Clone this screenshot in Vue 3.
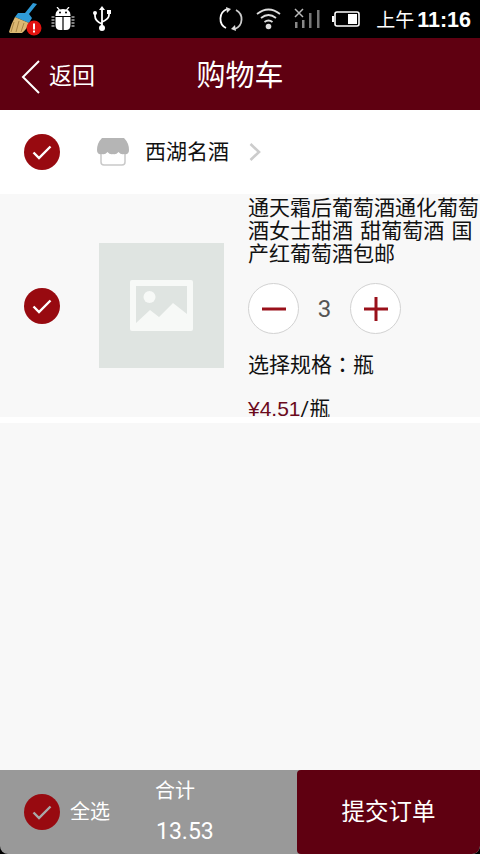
<script setup>
const title = '通天霜后葡萄酒通化葡萄酒女士甜酒 甜葡萄酒 国产红葡萄酒包邮'
const qty = 3
const spec = '瓶'
const price = '¥4.51'
const total = '13.53'
</script>

<template>
  <div class="page">
    <div class="status">
      <div class="status__left">
        <svg class="ic-broom" width="42" height="38" viewBox="0 0 42 38">
          <path d="M37 4 L33 3 L25 13 L18 13 L15 17 L29 23 L32 18 L29 14 Z" fill="#2f9bd8" />
          <path d="M15 17 L29 23 Q27 29 22 33 L10 33 Q10 33 9 32 Q11 24 15 17 Z" fill="#dcb872" />
          <path d="M14 22 L11 32 M19 21 L16 32 M24 23 L21 32" stroke="#a98445" stroke-width="1" fill="none" />
          <circle cx="34" cy="28" r="7.5" fill="#e1120f" />
          <rect x="33" y="23.5" width="2" height="6" fill="#fff" />
          <rect x="33" y="30.5" width="2" height="2" fill="#fff" />
        </svg>
        <svg class="ic-bug" width="24" height="24" viewBox="0 0 24 24">
          <path d="M6 0 L8.500 3 M18 0 L15.500 3" stroke="#fff" stroke-width="1.2" />
          <path d="M4.500 9 V8 Q4.500 2 12 2 Q19.500 2 19.500 8 V9 Z" fill="#fff" />
          <path d="M4.500 10 H11.400 V23 H9 Q4.500 23 4.500 18 Z M12.600 10 H19.500 V18 Q19.500 23 15 23 H12.600 Z" fill="#fff" />
          <path d="M0.500 10 H3.500 M0.500 13 H3.500 M0.500 16 H3.500 M0.500 19 H3.500 M20.500 10 H23.500 M20.500 13 H23.500 M20.500 16 H23.500 M20.500 19 H23.500" stroke="#fff" stroke-width="1.2" />
          <circle cx="9" cy="5.500" r="1" fill="#000" />
          <circle cx="15" cy="5.500" r="1" fill="#000" />
        </svg>
        <svg class="ic-usb" width="20" height="26" viewBox="0 0 20 26">
          <path d="M10 3 V22 M10 18 Q3 15 3 10 V8 M10 16 Q17 13 17 9 V7" stroke="#fff" stroke-width="1.8" fill="none" />
          <path d="M10 0 L13 4 H7 Z" fill="#fff" />
          <circle cx="3" cy="7" r="2" fill="#fff" />
          <rect x="15" y="4" width="4" height="4" fill="#fff" />
          <circle cx="10" cy="22" r="3" fill="#fff" />
        </svg>
      </div>
      <div class="status__right">
        <svg width="26" height="26" viewBox="0 0 26 26">
          <path d="M9 3 A10.5 10.5 0 0 0 8 22" stroke="#fff" stroke-width="1.8" fill="none" />
          <path d="M17 23 A10.5 10.5 0 0 0 18 4" stroke="#ccc" stroke-width="1.8" fill="none" />
          <path d="M8 1 L13 3 L9 7 Z" fill="#ddd" />
          <path d="M18 25 L13 23 L17 19 Z" fill="#ddd" />
        </svg>
        <svg width="25" height="22" viewBox="0 0 25 22">
          <path d="M1 6 Q12.5 -3 24 6 M5 10 Q12.5 4 20 10 M8.5 14 Q12.5 11 16.5 14" stroke="#ddd" stroke-width="1.8" fill="none" />
          <circle cx="12.5" cy="18.5" r="2.8" fill="#ddd" />
        </svg>
        <svg width="27" height="24" viewBox="0 0 27 24">
          <path d="M2 2 L10 10 M10 2 L2 10" stroke="#bbb" stroke-width="1.5" />
          <rect x="2" y="15" width="2.500" height="6" fill="#888" />
          <rect x="9" y="13" width="2.500" height="8" fill="#888" />
          <rect x="16" y="6" width="2.500" height="15" fill="#777" />
          <rect x="24" y="3" width="2.500" height="18" fill="#777" />
        </svg>
        <svg width="28" height="16" viewBox="0 0 28 16">
          <rect x="0" y="5" width="2" height="6" fill="#fff" />
          <rect x="3" y="1" width="24" height="14" rx="2" fill="none" stroke="#fff" stroke-width="1.6" />
          <rect x="16" y="3" width="9" height="10" fill="#fff" />
        </svg>
        <span class="status__time">上午<b>11:16</b></span>
      </div>
    </div>

    <header class="bar">
      <div class="bar__back">
        <svg width="20" height="34" viewBox="0 0 20 34">
          <path d="M18 1 L2 17 L18 33" stroke="#fff" stroke-width="2" fill="none" />
        </svg>
        <span class="bar__label">返回</span>
      </div>
      <h1 class="bar__title">购物车</h1>
    </header>

    <section class="shop">
      <span class="check">
        <svg width="20" height="16" viewBox="0 0 20 16"><path d="M1.5 8.5 L7 14 L18.5 2.5" stroke="#fff" stroke-width="2.4" fill="none" /></svg>
      </span>
      <svg class="shop__icon" width="32" height="28" viewBox="0 0 32 28">
        <path d="M4 15 V24 Q4 27 7 27 H25 Q28 27 28 24 V15" stroke="#c9c9c9" stroke-width="1.5" fill="none" />
        <path d="M5 0 H27 Q32 5 32 12 Q32 17 27 16 Q24 17 21.500 14 Q19 17 16 16 Q13 17 10.500 14 Q8 17 5 16 Q0 17 0 12 Q0 5 5 0 Z" fill="#b5b5b5" />
      </svg>
      <span class="shop__name">西湖名酒</span>
      <svg class="shop__more" width="14" height="20" viewBox="0 0 14 20">
        <path d="M2.500 2 L11 10 L2.500 18" stroke="#ccc" stroke-width="2.600" fill="none" />
      </svg>
    </section>

    <section class="item">
      <span class="check">
        <svg width="20" height="16" viewBox="0 0 20 16"><path d="M1.5 8.500 L7 14 L18.5 2.500" stroke="#fff" stroke-width="2.4" fill="none" /></svg>
      </span>
      <div class="item__pic">
        <svg width="63" height="51" viewBox="0 0 63 51">
          <path fill-rule="evenodd" fill="#f7f9f7" d="M2 0 H61 Q63 0 63 2 V49 Q63 51 61 51 H2 Q0 51 0 49 V2 Q0 0 2 0 Z M6 6 V43 L20 30 L29 37 L43 23 L57 34 V6 Z" />
          <circle cx="19.500" cy="17" r="6" fill="#f7f9f7" />
        </svg>
      </div>
      <div class="item__info">
        <p class="item__title">{{ title }}</p>
        <div class="stepper">
          <button type="button" class="stepper__btn">
            <svg width="24" height="24" viewBox="0 0 24 24"><rect y="10.500" width="24" height="3" fill="#99101a" /></svg>
          </button>
          <span class="stepper__num">{{ qty }}</span>
          <button type="button" class="stepper__btn">
            <svg width="24" height="24" viewBox="0 0 24 24"><path d="M0 12 H24 M12 0 V24" stroke="#99101a" stroke-width="3" /></svg>
          </button>
        </div>
        <p class="item__spec">选择规格<span class="item__colon">：</span>{{ spec }}</p>
        <p class="item__price"><em>{{ price }}</em>/瓶</p>
      </div>
    </section>

    <div class="rest"></div>

    <footer class="foot">
      <div class="foot__sum">
        <span class="check">
          <svg width="20" height="16" viewBox="0 0 20 16"><path d="M1.5 8.500 L7 14 L18.5 2.500" stroke="#a9a9a9" stroke-width="2.4" fill="none" /></svg>
        </span>
        <span class="foot__all">全选</span>
        <div class="foot__total">
          <span>合计</span>
          <span class="foot__num">{{ total }}</span>
        </div>
      </div>
      <button type="button" class="foot__submit"><span>提交订单</span></button>
    </footer>
  </div>
</template>

<style scoped>
.page {
  width: 480px;
  height: 854px;
  display: flex;
  flex-direction: column;
  overflow: hidden;
  background: #000;
  font-family: Roboto, "Noto Sans CJK SC", sans-serif;
}

.status {
  height: 38px;
  flex: none;
  display: flex;
  justify-content: space-between;
  align-items: center;
  background: #000;
  color: #fff;
}

.status__left {
  display: flex;
  align-items: center;
}

.ic-bug {
  margin-left: 9px;
}

.ic-usb {
  margin-left: 17px;
}

.status__right {
  display: flex;
  align-items: center;
  gap: 12px;
  padding-right: 9px;
}

.status__time {
  margin-left: 4px;
  font-size: 19px;
  font-family: "Noto Sans CJK SC", sans-serif;
  font-weight: 400;
}

.status__time b {
  margin-left: 3px;
  font-family: "Liberation Sans", sans-serif;
  font-size: 21.5px;
  font-weight: 700;
}

.bar {
  position: relative;
  height: 72px;
  flex: none;
  display: flex;
  align-items: center;
  justify-content: center;
  background: #5f0011;
  color: #fff;
}

.bar__back {
  position: absolute;
  left: 21px;
  top: 19px;
  display: flex;
  align-items: center;
  gap: 8px;
  font-size: 23px;
}

.bar__label {
  margin-bottom: 5px;
}

.bar__title {
  margin: 0 0 2px;
  font-size: 29px;
  font-weight: 400;
}

.shop {
  height: 84px;
  flex: none;
  display: flex;
  align-items: center;
  padding-left: 24px;
  background: #fff;
}

.check {
  width: 36px;
  height: 36px;
  flex: none;
  display: flex;
  align-items: center;
  justify-content: center;
  border-radius: 50%;
  background: #980a10;
}

.shop__icon {
  margin-left: 37px;
}

.shop__name {
  margin: 0 0 4px 16px;
  font-size: 21px;
  color: #111;
}

.shop__more {
  margin-left: 19px;
}

.item {
  height: 223px;
  flex: none;
  display: flex;
  align-items: center;
  padding-left: 24px;
  overflow: hidden;
  background: #f8f8f8;
}

.item__pic {
  width: 125px;
  height: 125px;
  flex: none;
  margin: 0 24px 0 39px;
  display: flex;
  align-items: center;
  justify-content: center;
  background: #dfe4e1;
}

.item__info {
  align-self: flex-start;
  width: 232px;
  flex: none;
  padding-top: 3px;
  color: #111;
}

.item__title {
  margin: 0;
  font-size: 21px;
  line-height: 23px;
  word-spacing: 2px;
}

.stepper {
  display: flex;
  align-items: center;
  margin-top: 17px;
}

.stepper__btn {
  width: 51px;
  height: 51px;
  padding: 0;
  display: flex;
  align-items: center;
  justify-content: center;
  border: 1px solid #d2d2d2;
  border-radius: 50%;
  background: #fff;
}

.stepper__num {
  width: 51px;
  text-align: center;
  font-size: 24px;
  color: #555;
}

.item__spec {
  margin: 15px 0 0;
  font-size: 21px;
  line-height: 28px;
}

.item__colon {
  font-family: "Noto Sans CJK TC", sans-serif;
}

.item__price {
  margin: 16px 0 0;
  font-size: 21px;
  line-height: 28px;
}

.item__price em {
  font-family: "Liberation Sans", sans-serif;
  font-style: normal;
  color: #6b0a1c;
}

.rest {
  flex: 1;
  background: #f8f8f8;
  border-top: 6px solid #fff;
}

.foot {
  height: 84px;
  flex: none;
  display: flex;
  overflow: hidden;
  border-radius: 0 0 8px 8px;
  background: #999;
  color: #fff;
}

.foot__sum {
  flex: 1;
  display: flex;
  align-items: center;
  padding-left: 24px;
}

.foot__all {
  margin: 0 0 3px 10px;
  font-size: 20px;
}

.foot__total {
  display: flex;
  flex-direction: column;
  gap: 14px;
  margin: 0 0 4px 45px;
  font-size: 20px;
}

.foot__num {
  margin-left: 1px;
  font-size: 23px;
}

.foot__submit {
  width: 183px;
  flex: none;
  padding: 0 0 4px;
  border: 0;
  border-radius: 4px 0 8px 4px;
  background: #5f0011;
  color: #fff;
  font-family: inherit;
  font-size: 23.5px;
}
</style>

<style>
html,
body {
  margin: 0;
  background: #000;
}
</style>
